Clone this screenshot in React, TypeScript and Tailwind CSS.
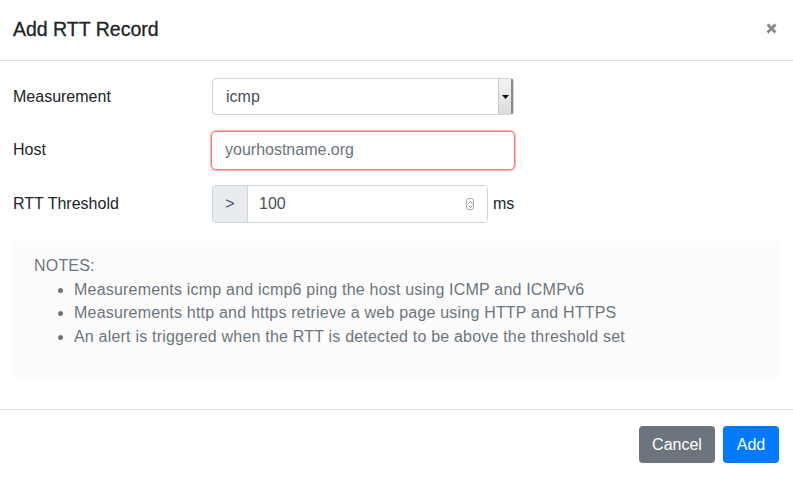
import React from "react";

export default function App() {
  const font = { fontFamily: '"Liberation Sans", Arial, sans-serif' };
  return (
    <div className="w-[793px] h-[477px] bg-white text-[#212529] flex flex-col" style={font}>
      {/* header */}
      <div className="h-[61px] shrink-0 border-b border-[#dee2e6] flex items-center justify-between pl-[13px] pr-[16px]">
        <h5 className="text-[19.5px] font-medium leading-[30px] -mt-[3px] [-webkit-text-stroke:0.3px_#212529]">Add RTT Record</h5>
        <span className="-mt-[3px]">
          <svg width="11" height="11" viewBox="0 0 11 11">
            <path d="M1.5 1.5 L9.5 9.5 M9.5 1.5 L1.5 9.5" stroke="#888" strokeWidth="2.8" strokeLinecap="butt" />
          </svg>
        </span>
      </div>

      {/* body */}
      <div className="flex flex-col pt-[17px] pl-[13px] pr-[14px] text-[16px]">
        <div className="flex items-center h-[37px]">
          <div className="w-[199px]">Measurement</div>
          <div className="w-[302px] h-[37px] border border-[#ced4da] rounded-[4px] flex items-center justify-between bg-white">
            <span className="pl-[13px] text-[#495057]">icmp</span>
            <div className="w-[15px] h-[35px] bg-gradient-to-b from-[#f3f3f3] to-[#dcdcdc] border-l border-[#c8c8c8] border-r-2 border-r-[#8c8c8c] flex items-center justify-center">
              <svg width="7" height="4" viewBox="0 0 7 4"><path d="M0 0 L7 0 L3.5 4 Z" fill="#111" /></svg>
            </div>
          </div>
        </div>

        <div className="flex items-center h-[38px] mt-[16px]">
          <div className="w-[198px]">Host</div>
          <div className="w-[304px] h-[39px] border border-[#f08080] rounded-[5px] shadow-[0_0_0_1px_rgba(255,120,120,0.55)] flex items-center bg-white">
            <span className="pl-[13px] text-[#6c757d]">yourhostname.org</span>
          </div>
        </div>

        <div className="flex items-center h-[38px] mt-[16px]">
          <div className="w-[199px]">RTT Threshold</div>
          <div className="w-[276px] h-[38px] flex border border-[#ced4da] rounded-[4px] overflow-hidden">
            <div className="w-[35px] bg-[#e9ecef] border-r border-[#ced4da] flex items-center justify-center text-[#495057]">&gt;</div>
            <div className="flex-1 flex items-center justify-between pl-[11px] pr-[13px] bg-white text-[#495057]">
              <span>100</span>
              <div className="w-[8px] h-[12px] border border-[#aaa] rounded-[3px] flex flex-col items-center justify-center gap-[1px]">
                <svg width="5" height="3" viewBox="0 0 5 3"><path d="M0.5 2.5 L2.5 0.5 L4.5 2.5" stroke="#777" strokeWidth="0.8" fill="none" /></svg>
                <svg width="5" height="3" viewBox="0 0 5 3"><path d="M0.5 0.5 L2.5 2.5 L4.5 0.5" stroke="#777" strokeWidth="0.8" fill="none" /></svg>
              </div>
            </div>
          </div>
          <span className="ml-[5px]">ms</span>
        </div>

        <div className="mt-[18px] h-[137px] bg-[#fcfcfc] rounded-[4px] pl-[21px] pt-[13px] text-[#6c757d] leading-[23.5px] tracking-[0.2px]">
          <div>NOTES:</div>
          <ul className="pl-[40px] list-disc">
            <li>Measurements icmp and icmp6 ping the host using ICMP and ICMPv6</li>
            <li>Measurements http and https retrieve a web page using HTTP and HTTPS</li>
            <li>An alert is triggered when the RTT is detected to be above the threshold set</li>
          </ul>
        </div>
      </div>

      <div className="mt-[31px] border-t border-[#dee2e6] flex justify-end items-start gap-[8px] pt-[16px] pr-[14px] text-[16px]">
        <button className="h-[37px] w-[76px] rounded-[4px] bg-[#6c757d] text-white">Cancel</button>
        <button className="h-[37px] w-[56px] rounded-[4px] bg-[#007bff] text-white">Add</button>
      </div>
    </div>
  );
}
